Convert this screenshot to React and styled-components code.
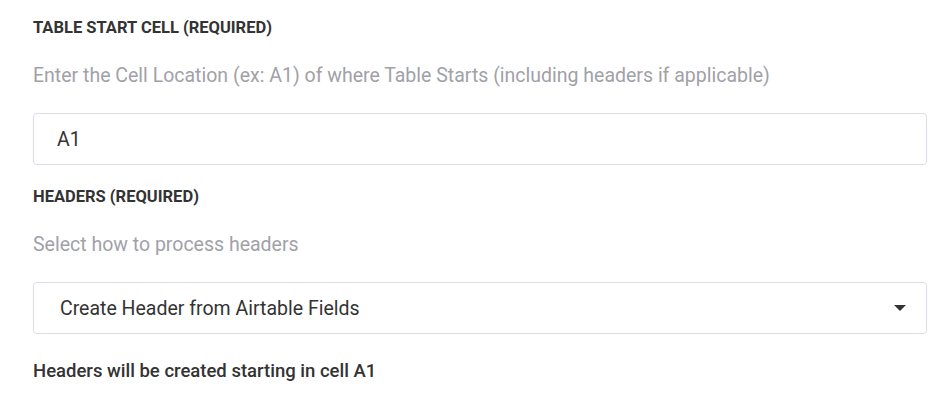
import React from 'react';
import styled, { createGlobalStyle } from 'styled-components';

const GlobalStyle = createGlobalStyle`
  body {
    margin: 0;
    background: #fff;
    font-family: Roboto, "Liberation Sans", sans-serif;
  }
`;

function App() {
  return (
    <>
      <GlobalStyle />
      <StForm>
        <StField>
          <StLabel>Table Start Cell (required)</StLabel>
          <StHint>Enter the Cell Location (ex: A1) of where Table Starts (including headers if applicable)</StHint>
          <StInput defaultValue="A1" />
        </StField>
        <StField>
          <StLabel>Headers (required)</StLabel>
          <StHint>Select how to process headers</StHint>
          <StSelectBox>
            <span>Create Header from Airtable Fields</span>
            <StCaret />
          </StSelectBox>
        </StField>
        <StNote>Headers will be created starting in cell A1</StNote>
      </StForm>
    </>
  );
}

export default App;

const StForm = styled.div`
  display: flex;
  flex-direction: column;
  gap: 22px;
  padding: 18px 13px 0 33px;
`;
const StField = styled.div`
  display: flex;
  flex-direction: column;
`;
const StLabel = styled.div`
  font-size: 16.5px;
  line-height: 20px;
  font-weight: 700;
  text-transform: uppercase;
  color: #333;
  margin-bottom: 26px;
`;
const StHint = styled.div`
  font-size: 19.5px;
  line-height: 24px;
  color: #a1a1a8;
  margin-bottom: 25px;
`;
const StInput = styled.input`
  box-sizing: border-box;
  height: 52px;
  width: 100%;
  border: 1px solid #dcdde8;
  border-radius: 4px;
  padding: 0 23px;
  font-family: inherit;
  font-size: 19.5px;
  color: #333;
  outline: none;
`;
const StSelectBox = styled.div`
  box-sizing: border-box;
  height: 52px;
  display: flex;
  align-items: center;
  justify-content: space-between;
  border: 1px solid #dcdde8;
  border-radius: 4px;
  padding: 0 20px 0 26px;
  font-size: 19.5px;
  color: #333;
`;
const StCaret = styled.span`
  width: 0;
  height: 0;
  border-left: 6px solid transparent;
  border-right: 6px solid transparent;
  border-top: 6px solid #333;
`;
const StNote = styled.div`
  font-size: 18.5px;
  line-height: 22px;
  font-weight: 500;
  color: #333;
  margin-top: 4px;
`;
